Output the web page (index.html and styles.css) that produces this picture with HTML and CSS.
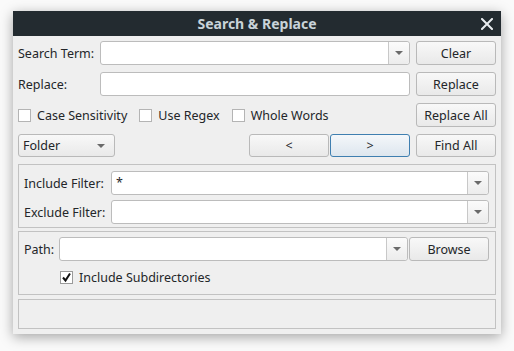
FILE: index.html
```html
<!DOCTYPE html>
<html>
<head>
<meta charset="utf-8">
<link rel="stylesheet" href="styles.css">
</head>
<body>
<div class="window">
  <div class="titlebar">
    <span class="title">Search &amp; Replace</span>
    <svg class="close" width="12" height="12" viewBox="0 0 12 12"><path d="M1 1 L11 11 M11 1 L1 11" stroke="#e8ecef" stroke-width="2" stroke-linecap="square"/></svg>
  </div>
  <div class="content">
    <div class="top">
      <div class="row">
        <span class="lbl lbl-main">Search Term:</span>
        <div class="combo grow"><div class="field"></div><div class="drop"><span class="tri"></span></div></div>
      </div>
      <div class="btn">Clear</div>

      <div class="row">
        <span class="lbl lbl-main">Replace:</span>
        <div class="input grow"></div>
      </div>
      <div class="btn">Replace</div>

      <div class="row checks">
        <label class="chk"><span class="box"></span>Case Sensitivity</label>
        <label class="chk"><span class="box"></span>Use Regex</label>
        <label class="chk"><span class="box"></span>Whole Words</label>
      </div>
      <div class="btn">Replace All</div>

      <div class="row nav">
        <div class="select">Folder<span class="tri"></span></div>
        <div class="spacer"></div>
        <div class="btn navbtn">&lt;</div>
        <div class="btn navbtn active">&gt;</div>
      </div>
      <div class="btn">Find All</div>
    </div>

    <div class="group g1">
      <div class="row">
        <span class="lbl lbl-filter">Include Filter:</span>
        <div class="combo grow"><div class="field">*</div><div class="drop"><span class="tri"></span></div></div>
      </div>
      <div class="row">
        <span class="lbl lbl-filter">Exclude Filter:</span>
        <div class="combo grow"><div class="field"></div><div class="drop"><span class="tri"></span></div></div>
      </div>
    </div>

    <div class="group g2">
      <div class="row">
        <span class="lbl lbl-path">Path:</span>
        <div class="combo grow"><div class="field"></div><div class="drop"><span class="tri"></span></div></div>
        <div class="btn browse">Browse</div>
      </div>
      <label class="chk sub"><span class="box checked"><svg width="11" height="11" viewBox="0 0 11 11"><path d="M2 5.5 L4.5 8.5 L9 1.5" fill="none" stroke="#111" stroke-width="2"/></svg></span>Include Subdirectories</label>
    </div>

    <div class="status"></div>
  </div>
</div>
</body>
</html>
```

FILE: styles.css
```css
* { box-sizing: border-box; }
html, body { margin: 0; padding: 0; }
body {
  background: #fafafa;
  font-family: "Noto Sans", "Open Sans", sans-serif;
  font-size: 12.5px;
  color: #232629;
  width: 514px;
  height: 351px;
  overflow: hidden;
}
.window {
  margin: 11px 0 0 13px;
  width: 488px;
  height: 323px;
  background: #efefef;
  box-shadow: 0 3px 12px rgba(0,0,0,0.35);
  display: flex;
  flex-direction: column;
}
.titlebar {
  height: 26px;
  background: #232b30;
  display: flex;
  align-items: center;
  justify-content: center;
  position: relative;
}
.title {
  color: #c9d3d9;
  font-weight: bold;
  font-size: 14px;
}
.close {
  position: absolute;
  right: 8px;
  top: 7px;
}
.content {
  padding: 5px 5px 5px 5px;
  display: flex;
  flex-direction: column;
}
.top {
  display: grid;
  grid-template-columns: 1fr 80px;
  column-gap: 6px;
  grid-template-rows: 24px 24px 24px 23px;
  row-gap: 7px;
}
.row {
  display: flex;
  align-items: center;
}
.grow { flex: 1; }
.lbl { white-space: nowrap; }
.lbl-main { width: 82px; }
.lbl-filter { width: 87px; }
.lbl-path { width: 35px; }
.input, .combo {
  height: 24px;
  background: #fff;
  border: 1px solid #bcbcbc;
  border-radius: 3px;
}
.combo { display: flex; }
.field {
  flex: 1;
  padding: 2px 4px;
  line-height: 18px;
}
.drop {
  width: 21px;
  border-left: 1px solid #c8c8c8;
  background: linear-gradient(#fbfbfb, #ececec);
  border-radius: 0 3px 3px 0;
  display: flex;
  align-items: center;
  justify-content: center;
}
.tri {
  width: 0; height: 0;
  border-left: 4px solid transparent;
  border-right: 4px solid transparent;
  border-top: 4px solid #6a6a6a;
}
.btn {
  height: 24px;
  border: 1px solid #b9b9b9;
  border-radius: 3px;
  background: linear-gradient(#f8f8f8, #e9e9e9);
  display: flex;
  align-items: center;
  justify-content: center;
}
.chk {
  display: flex;
  align-items: center;
  margin-right: 12px;
}
.box {
  width: 13px; height: 13px;
  background: #fff;
  border: 1px solid #b4b4b4;
  margin-right: 6px;
  display: inline-flex;
  align-items: center;
  justify-content: center;
}
.select {
  width: 97px;
  height: 23px;
  border: 1px solid #b9b9b9;
  border-radius: 3px;
  background: linear-gradient(#f8f8f8, #e9e9e9);
  display: flex;
  align-items: center;
  justify-content: space-between;
  padding: 0 9px 0 4px;
}
.spacer { flex: 1; }
.navbtn { width: 80px; height: 23px; }
.navbtn.active {
  margin-left: 1px;
  border-color: #3f7fb0;
  background: linear-gradient(#f4f7fa, #dde6ee);
}
.top > .btn:last-child { height: 23px; }
.group {
  border: 1px solid #c2c2c2;
  margin-top: 7px;
}
.g1 {
  height: 64px;
  padding: 6px 6px 0 5px;
  display: flex;
  flex-direction: column;
  gap: 5px;
}
.g2 {
  margin-top: 3px;
  height: 64px;
  padding: 5px 6px 0 5px;
}
.browse { width: 80px; margin-left: 1px; }
.sub { margin-left: 36px; margin-top: 8px; }
.sub .box { border-color: #9a9a9a; margin-right: 6px; }
.status {
  margin-top: 4px;
  height: 30px;
  border: 1px solid #c2c2c2;
}
```
